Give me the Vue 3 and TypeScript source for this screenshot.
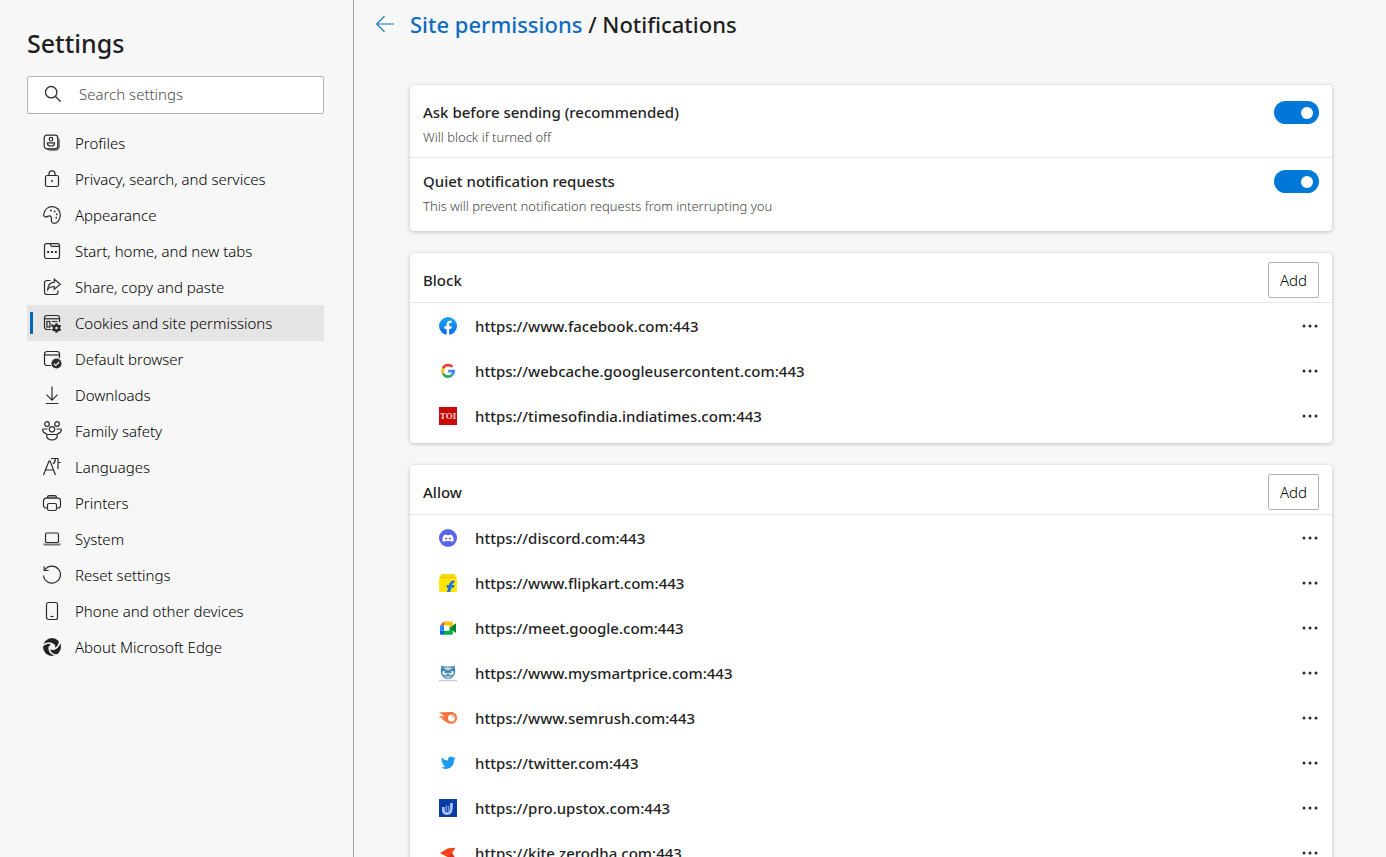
<script setup lang="ts">
import { ref } from 'vue'

interface NavItem {
  label: string
  icon: string
  active?: boolean
}

interface Site {
  url: string
  icon: string
}

interface SiteGroup {
  title: string
  sites: Site[]
}

const search = ref('')

const permissions = ref([
  { id: 'ask', title: 'Ask before sending (recommended)', hint: 'Will block if turned off', on: true },
  { id: 'quiet', title: 'Quiet notification requests', hint: 'This will prevent notification requests from interrupting you', on: true },
])

const navItems: NavItem[] = [
  {
    label: 'Profiles',
    icon: '<path d="M5 16c1 1.300 2 1.600 3.500 1.600h4.500c3 0 4.600-1.600 4.600-4.600V8.500c0-1.500-.4-2.600-1.600-3.500v7.900c0 2.100-1 3.100-3.100 3.100z" fill="#8a8a8a" stroke="#777" stroke-width=".8"/><rect x="2.200" y="2.200" width="13.600" height="13.600" rx="2.800"/><circle cx="9" cy="6.200" r="1.800"/><path d="M5.500 9.800h7v1c0 1.400-1.400 2.200-3.500 2.200s-3.500-.8-3.500-2.200z"/>',
  },
  {
    label: 'Privacy, search, and services',
    icon: '<rect x="3.500" y="6.500" width="13" height="11" rx="1.800"/><path d="M7 6.500V4.800a3 3 0 0 1 6 0v1.700"/><circle cx="10" cy="12" r="1" fill="#2b2b2b" stroke="none"/>',
  },
  {
    label: 'Appearance',
    icon: '<path d="M1.700 9.500C2.500 4.500 6 1.600 10 1.600c4.800 0 8.300 3.600 8.300 8.500 0 4.500-2.900 8.200-6 8.200-2.500 0-3.100-1.600-2.900-3.700.2-2.300-.2-3.700-2-3.700-1.400 0-2.300 1.200-3.900.9-1.300-.2-2-1-1.800-2.300z"/><g fill="#2b2b2b" stroke="none"><circle cx="9" cy="5.500" r=".9"/><circle cx="12.600" cy="6.400" r=".9"/><circle cx="14.700" cy="9.300" r=".9"/><circle cx="14.300" cy="12.700" r=".9"/></g>',
  },
  {
    label: 'Start, home, and new tabs',
    icon: '<rect x="2.500" y="2.600" width="15" height="14.900" rx="2"/><path d="M8.500 2.600v1.200c0 1 .5 1.500 1.500 1.500h7.300"/><g fill="#2b2b2b" stroke="none"><rect x="5.200" y="10" width="2" height="2"/><rect x="9" y="10" width="2" height="2"/><rect x="12.800" y="10" width="2" height="2"/></g>',
  },
  {
    label: 'Share, copy and paste',
    icon: '<path d="M8.500 3.500H5a2.500 2.500 0 0 0-2.500 2.500v9A2.500 2.500 0 0 0 5 17.500h8.500A2.500 2.500 0 0 0 16 15v-1.500"/><path d="M12.300 2.300l6 5-6 5V9.500c-3 0-5 .8-6.600 3C6 8.300 8.300 5.500 12.300 5.200z"/>',
  },
  {
    label: 'Cookies and site permissions',
    active: true,
    icon: '<path d="M9 16.500H5A2.500 2.500 0 0 1 2.500 14V5A2.500 2.500 0 0 1 5 2.500h10A2.500 2.500 0 0 1 17.500 5v4"/><path d="M2.500 5.800h15"/><rect x="4.900" y="8.500" width="3" height="5.500"/><path d="M10 8.500h5.500M10 11v3"/><circle cx="14.500" cy="15" r="3.100" fill="#2b2b2b"/><path d="M14.500 10.200v9.600M10.300 12.600l8.400 4.800M10.300 17.400l8.400-4.800" stroke-width="2"/><circle cx="14.500" cy="15" r="1.300" fill="#e5e5e5" stroke="none"/>',
  },
  {
    label: 'Default browser',
    icon: '<path d="M9 16.500H5A2.500 2.500 0 0 1 2.500 14V5A2.500 2.500 0 0 1 5 2.500h10A2.500 2.500 0 0 1 17.500 5v4"/><path d="M2.500 6h15"/><circle cx="14.500" cy="14.500" r="4.500" fill="#2b2b2b"/><path d="M12 14.700l1.800 1.700 3.400-3.400" stroke="#f7f7f7"/>',
  },
  {
    label: 'Downloads',
    icon: '<path d="M10 1.500V15M4.500 9.700l5.500 5.500 5.500-5.500M3.800 18.500h12.600"/>',
  },
  {
    label: 'Family safety',
    icon: '<circle cx="5" cy="3" r="2.300"/><circle cx="15" cy="3" r="2.300"/><circle cx="10" cy="8.300" r="2.700"/><path d="M5.500 8H1.700c-.9 0-1.200.6-1 1.400.5 2 2 3.300 4.300 3.600M14.500 8h3.800c.9 0 1.200.6 1 1.400-.5 2-2 3.300-4.300 3.600"/><path d="M5.200 13.500h9.600c.4 0 .6.3.6.7-.2 2.800-2.200 4.700-5.400 4.700s-5.200-1.900-5.400-4.700c0-.4.200-.7.600-.7z"/>',
  },
  {
    label: 'Languages',
    icon: '<path d="M1.500 18L7 4h1l5.500 14M3.500 13h8"/><path d="M9 1.500h4.300c.3 2.200-.5 4-2.300 5.500M16 1v11M16 5.500h2.800M13.700 1.500H16"/>',
  },
  {
    label: 'Printers',
    icon: '<path d="M5.500 5V4.300C5.500 3 6 2.500 7.300 2.500h5.400c1.300 0 1.800.5 1.800 1.800V5" fill="#999"/><path d="M5.500 15H4a2.500 2.500 0 0 1-2.500-2.500V7.800A2.600 2.600 0 0 1 4.100 5.200h11.800a2.600 2.600 0 0 1 2.600 2.600v4.700A2.500 2.500 0 0 1 16 15h-1.500"/><rect x="5.500" y="10.500" width="9" height="7" rx="1.500"/>',
  },
  {
    label: 'System',
    icon: '<rect x="3.500" y="4" width="13" height="9.500" rx="1.600"/><path d="M1.500 15.500h17" stroke="#777" stroke-width="2"/>',
  },
  {
    label: 'Reset settings',
    icon: '<path d="M3 4.700a8.500 8.500 0 1 1-1.500 5.800"/><path d="M2.200 1.200v4.300h4.400"/>',
  },
  {
    label: 'Phone and other devices',
    icon: '<rect x="4.500" y="1.500" width="11" height="17" rx="2"/><path d="M8.500 15.500h3"/>',
  },
  {
    label: 'About Microsoft Edge',
    icon: '<circle cx="10" cy="10" r="9" fill="#222" stroke="none"/><g stroke="#f7f7f7" stroke-width="1.500"><path d="M0 9.300C2.500 5.800 8 4.800 12 8"/><path d="M17.500 3.500c.8 4-2.500 8.500-6.500 9"/><path d="M15.500 18.300C10.500 18.300 6.500 15 7.300 9.500"/></g><circle cx="10.300" cy="10" r="3" fill="#f7f7f7" stroke="none"/>',
  },
]

const groups: SiteGroup[] = [
  {
    title: 'Block',
    sites: [
      {
        url: 'https://www.facebook.com:443',
        icon: '<defs><linearGradient id="fb" x2="0" y2="1"><stop stop-color="#19aaff"/><stop offset="1" stop-color="#0866df"/></linearGradient></defs><circle cx="9" cy="9" r="9" fill="url(#fb)"/><path d="M7.600 18v-6.200H5.300V9.200h2.300V7.300c0-2.400 1.400-3.600 3.400-3.600.9 0 1.700.1 1.700.1V6h-1.100c-1.100 0-1.400.7-1.400 1.400v1.800h2.500l-.4 2.600h-2.100V18z" fill="#fff"/>',
      },
      {
        url: 'https://webcache.googleusercontent.com:443',
        icon: '<g fill="none" stroke-width="2.700"><path d="M13.300 4.900A5.600 5.600 0 0 0 4 6.500" stroke="#ea4335"/><path d="M4 6.500a5.600 5.600 0 0 0 0 5" stroke="#fbbc05"/><path d="M4 11.500a5.600 5.600 0 0 0 8.800 1.700" stroke="#34a853"/><path d="M12.800 13.200A5.600 5.600 0 0 0 14.600 9.200H9.200" stroke="#4285f4"/></g>',
      },
      {
        url: 'https://timesofindia.indiatimes.com:443',
        icon: '<rect width="18" height="18" fill="#c90808"/><text x="9" y="12" text-anchor="middle" font-family="Liberation Serif, serif" font-size="9" font-weight="700" fill="#f3d0d0">TOI</text>',
      },
    ],
  },
  {
    title: 'Allow',
    sites: [
      {
        url: 'https://discord.com:443',
        icon: '<circle cx="9" cy="9" r="9" fill="#5865e8"/><path d="M6.800 5.400l.5.600h3.400l.5-.6 1.800.6c1.200 1.800 1.800 3.800 1.600 6l-2.200 1-.8-1.100H6.400L5.600 13l-2.200-1c-.2-2.200.4-4.200 1.600-6z" fill="#fff"/><circle cx="7.100" cy="9.500" r="1.100" fill="#5865e8"/><circle cx="10.900" cy="9.500" r="1.100" fill="#5865e8"/>',
      },
      {
        url: 'https://www.flipkart.com:443',
        icon: '<path d="M2 0h14l1 4H1z" fill="#ffd814"/><path d="M0 3.500h18V16a2 2 0 0 1-2 2H2a2 2 0 0 1-2-2z" fill="#ffe500"/><path d="M1 3.500h16" stroke="#e8b900" stroke-width=".8"/><path d="M8 18l1.200-4.300H7.300l.6-2.600h2c.7-3.200 2.300-4.900 5.700-4.600l-.6 2.700c-1.300-.1-1.700.5-2 1.900h2.300l-.6 2.600h-2.300L11.200 18z" fill="#1f74d8"/>',
      },
      {
        url: 'https://meet.google.com:443',
        icon: '<path d="M1 6.500L5 2.500v4z" fill="#ea4335"/><path d="M5 2.500h7.500c.8 0 1.300.5 1.300 1.300V7L10.500 9V6.500H5z" fill="#fbbc04"/><path d="M1 6.500h4v5.200H1z" fill="#2684fc"/><path d="M1 11.700h4v4H2.300c-.8 0-1.300-.5-1.300-1.300z" fill="#0066da"/><path d="M5 11.700h5.500V9l3.300-2v7.400c0 .8-.5 1.300-1.300 1.300H5z" fill="#00ac47"/><path d="M11 9l5-4.300c.5-.4 1-.2 1 .4v8c0 .6-.5.800-1 .4z" fill="#00832d"/>',
      },
      {
        url: 'https://www.mysmartprice.com:443',
        icon: '<path d="M2 1.500c3 1.300 11 1.300 14 0-.3 1.500-.2 2.500.2 4.300C17 10.500 13.800 15 9 15S1 10.500 1.800 5.800c.4-1.800.5-2.800.2-4.300z" fill="#4c93ba"/><path d="M3.800 3.800h10.400L9 6z" fill="#dcebf3"/><circle cx="6" cy="8.500" r="2.500" fill="#fff"/><circle cx="12" cy="8.500" r="2.500" fill="#fff"/><path d="M5.500 12c2 .7 5 .7 7 0-.8 1.200-2 1.800-3.500 1.800s-2.700-.6-3.500-1.800z" fill="#dcebf3"/><path d="M2.500 5.200L9 8.300l6.500-3.100" fill="none" stroke="#2c6a91" stroke-width="1.200"/><circle cx="6.500" cy="8.700" r=".9" fill="#2c6a91"/><circle cx="11.500" cy="8.700" r=".9" fill="#2c6a91"/><path d="M0 16.700h18" stroke="#a9a9c4" stroke-width=".8"/>',
      },
      {
        url: 'https://www.semrush.com:443',
        icon: '<path d="M0 3.500c3 0 8-.4 12.200-.4 3.500 0 5.800 2.600 5.800 5.800s-2.500 5.800-5.800 5.800c-3.600 0-5-1.500-8.700-4.200H1.200c1.200-.3 2.200-.5 3.400-.8C2 9.200.5 8.200 0 7.300h5.500C4 6 2 4.700 0 3.500z" fill="#ff7342"/><circle cx="12.500" cy="8.900" r="3.500" fill="#fff"/><path d="M12.500 6.600c1.400 0 2.300 1 2.400 2.100" fill="none" stroke="#ff7342"/>',
      },
      {
        url: 'https://twitter.com:443',
        icon: '<path d="M16.700 4.200c-.5.300-1.100.4-1.800.5.600-.4 1.100-1 1.300-1.700-.6.300-1.200.6-1.900.7a3 3 0 0 0-5.200 2.800C6.600 6.400 4.400 5.200 2.900 3.400c-.8 1.500-.4 3.100.9 4.100-.5 0-.9-.2-1.300-.4 0 1.500 1.100 2.700 2.400 3-.4.1-.9.100-1.300 0 .4 1.200 1.500 2.100 2.800 2.100-1.300 1-2.800 1.400-4.500 1.300C6.700 16.700 15 14.600 15.100 6c.7-.5 1.200-1.100 1.600-1.800z" fill="#1d9bf0"/>',
      },
      {
        url: 'https://pro.upstox.com:443',
        icon: '<rect width="18" height="18" fill="#083ba8"/><path d="M4.300 8c0 4-.2 6.700 3.500 6.700C12 14.700 12.500 12 12.500 4" fill="none" stroke="#a9c1f2" stroke-width="2.800"/><path d="M7.300 6.500v6M9.500 7v5" stroke="#6f92dd" stroke-width="1.400"/>',
      },
      {
        url: 'https://kite.zerodha.com:443',
        icon: '<path d="M16.500 3.800L13 9l3.500 5.500-8-1.400L1 9l8-4.700z" fill="#f6461a"/><path d="M13 9l3.500 5.500-8-1.400z" fill="#db342c"/>',
      },
    ],
  },
]
</script>

<template>
  <div class="page">
    <aside class="sidebar">
      <h1 class="heading">Settings</h1>
      <label class="search">
        <svg class="search-icon" viewBox="0 0 18 18" aria-hidden="true">
          <circle cx="7.200" cy="7.200" r="5.700" />
          <path d="M11.300 11.300l5.400 5.400" />
        </svg>
        <input v-model="search" type="text" placeholder="Search settings" aria-label="Search settings" />
      </label>
      <nav class="nav">
        <a
          v-for="item in navItems"
          :key="item.label"
          href="#"
          class="nav-item"
          :class="{ active: item.active }"
          :aria-current="item.active ? 'page' : undefined"
        >
          <svg class="nav-icon" viewBox="0 0 20 20" aria-hidden="true" v-html="item.icon"></svg>
          <span>{{ item.label }}</span>
        </a>
      </nav>
    </aside>

    <main class="content">
      <header class="title-bar">
        <button class="back" type="button" aria-label="Back">
          <svg viewBox="0 0 20 18" aria-hidden="true">
            <path d="M9.500 1.200L1.700 9l7.800 7.800M1.700 9H19" />
          </svg>
        </button>
        <h2 class="title"><a href="#">Site permissions</a> / Notifications</h2>
      </header>

      <section class="card">
        <div v-for="p in permissions" :key="p.id" class="permission">
          <div>
            <label :for="p.id" class="permission-title">{{ p.title }}</label>
            <p class="hint">{{ p.hint }}</p>
          </div>
          <input :id="p.id" v-model="p.on" class="toggle" type="checkbox" role="switch" />
        </div>
      </section>

      <section v-for="group in groups" :key="group.title" class="card">
        <div class="card-head">
          <h3>{{ group.title }}</h3>
          <button class="add" type="button">Add</button>
        </div>
        <ul class="sites">
          <li v-for="site in group.sites" :key="site.url" class="site">
            <svg class="site-icon" viewBox="0 0 18 18" aria-hidden="true" v-html="site.icon"></svg>
            <span class="url">{{ site.url }}</span>
            <button class="more" type="button" :aria-label="'More actions for ' + site.url">
              <svg viewBox="0 0 16 4" aria-hidden="true">
                <circle cx="2" cy="2" r="1.500" />
                <circle cx="8" cy="2" r="1.500" />
                <circle cx="14" cy="2" r="1.500" />
              </svg>
            </button>
          </li>
        </ul>
      </section>
    </main>
  </div>
</template>

<style>
body {
  margin: 0;
  background: #f7f7f7;
}
</style>

<style scoped>
.page {
  display: flex;
  height: 100vh;
  overflow: hidden;
  background: #f7f7f7;
  color: #1f1f1f;
  font-family: "Noto Sans", "Open Sans", sans-serif;
  font-size: 15px;
  font-weight: 300;
  line-height: 20px;
}

.page * {
  box-sizing: border-box;
}

.sidebar {
  flex: 0 0 354px;
  padding: 27px 29px 0 27px;
  border-right: 1px solid #a6a6a6;
}

.heading {
  margin: 0 0 17px;
  font-size: 25px;
  font-weight: 500;
  line-height: 32px;
}

.search {
  display: flex;
  align-items: center;
  gap: 17px;
  height: 38px;
  padding: 0 16px 2px;
  border: 1px solid #b3b3b3;
  border-radius: 2px;
  background: #fff;
}

.search-icon {
  flex: none;
  width: 18px;
  height: 18px;
  fill: none;
  stroke: #333;
  stroke-width: 1.3;
}

.search input {
  flex: 1;
  min-width: 0;
  padding: 0;
  border: 0;
  outline: 0;
  background: none;
  color: inherit;
  font: inherit;
}

.search input::placeholder {
  color: #4d4d4d;
  opacity: 1;
}

.nav {
  margin-top: 11px;
}

.nav-item {
  position: relative;
  display: flex;
  align-items: center;
  gap: 13px;
  height: 36px;
  padding-left: 15px;
  color: #000;
  text-decoration: none;
}

.nav-item.active {
  background: #e5e5e5;
}

.nav-item.active::before {
  content: "";
  position: absolute;
  left: 3px;
  top: 7px;
  bottom: 7px;
  width: 3px;
  background: #0067b8;
}

.nav-icon {
  width: 20px;
  height: 20px;
  fill: none;
  stroke: #2b2b2b;
  stroke-width: 1.2;
}

.content {
  flex: 1;
  min-width: 0;
  padding: 7px 54px 0 56px;
}

.title-bar {
  display: flex;
  align-items: center;
  gap: 15px;
  margin: 0 0 44px -35px;
}

.back {
  display: flex;
  padding: 0;
  border: 0;
  background: none;
}

.back svg {
  width: 20px;
  height: 18px;
  fill: none;
  stroke: #1571bd;
  stroke-width: 1.2;
}

.title {
  margin: 0;
  font-size: 22px;
  font-weight: 500;
  line-height: 34px;
}

.title a {
  color: #0f6cbd;
  text-decoration: none;
}

.card {
  margin-bottom: 22px;
  border-radius: 4px;
  background: #fff;
  box-shadow: 0 1px 4px rgba(0, 0, 0, 0.24);
}

.permission {
  display: flex;
  justify-content: space-between;
  align-items: flex-start;
  height: 72px;
  padding: 16px 13px 0;
}

.permission + .permission {
  height: 74px;
  padding-top: 12px;
  border-top: 1px solid #e5e5e5;
}

.permission-title {
  display: block;
  font-weight: 500;
  line-height: 22px;
}

.hint {
  margin: 5px 0 0;
  color: #454545;
  font-size: 13px;
  line-height: 18px;
}

.toggle {
  appearance: none;
  display: flex;
  align-items: center;
  width: 45px;
  height: 23px;
  margin: 0;
  padding: 0 6px;
  border-radius: 12px;
  background: #8a8a8a;
}

.toggle::before {
  content: "";
  width: 12px;
  height: 12px;
  border-radius: 50%;
  background: #fff;
}

.toggle:checked {
  justify-content: flex-end;
  background: #0078d7;
}

.card-head {
  display: flex;
  align-items: center;
  justify-content: space-between;
  height: 50px;
  padding: 4px 13px 0;
  border-bottom: 1px solid #e5e5e5;
}

.card-head h3 {
  margin: 0;
  font-size: 15px;
  font-weight: 500;
}

.add {
  width: 51px;
  height: 36px;
  padding: 0;
  border: 1px solid #b3b3b3;
  border-radius: 2px;
  background: #fff;
  color: #000;
  font: inherit;
}

.sites {
  margin: 0;
  padding: 0 0 5px;
  list-style: none;
}

.site {
  display: flex;
  align-items: center;
  gap: 18px;
  height: 45px;
  padding: 0 14px 0 29px;
}

.site-icon {
  flex: none;
  width: 18px;
  height: 18px;
}

.url {
  flex: 1;
  font-weight: 500;
}

.more {
  display: flex;
  padding: 0;
  border: 0;
  background: none;
}

.more svg {
  width: 16px;
  height: 4px;
  fill: #2b2b2b;
}
</style>
